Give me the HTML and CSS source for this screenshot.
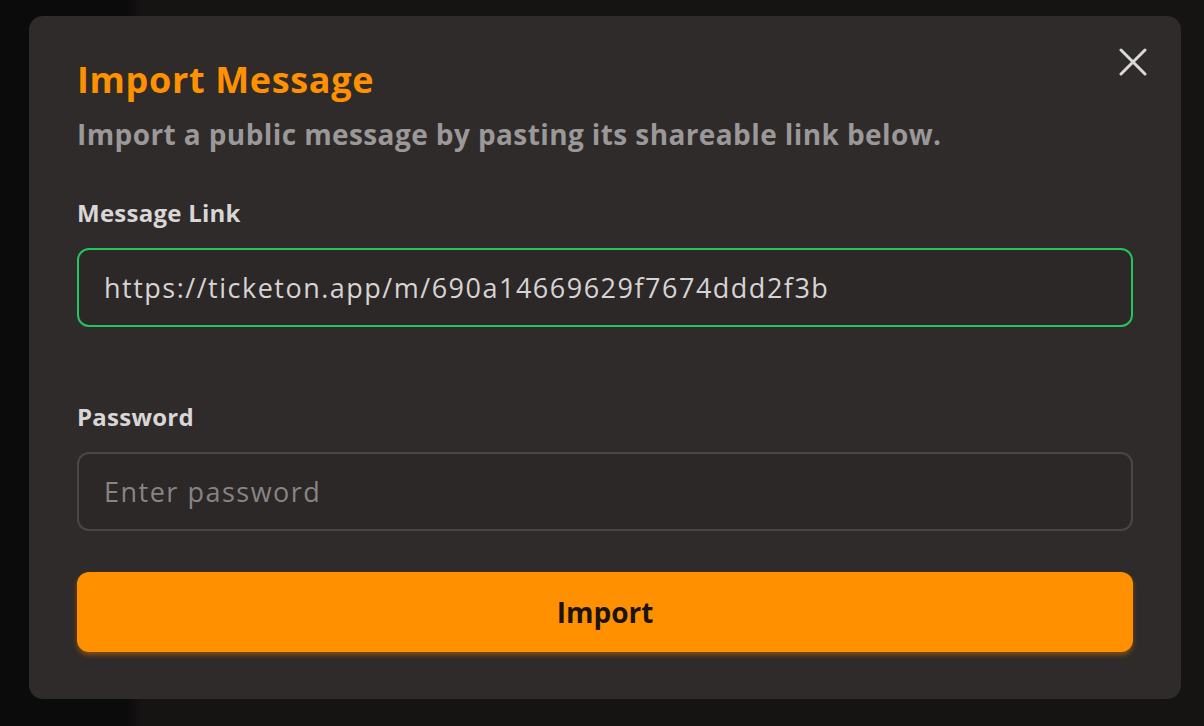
FILE: index.html
```html
<!DOCTYPE html>
<html lang="en">
<head>
  <meta charset="UTF-8">
  <meta name="viewport" content="width=device-width, initial-scale=1.0">
  <title>Import Message</title>
  <link rel="stylesheet" href="styles.css">
</head>
<body>
  <div class="backdrop">
    <div class="modal">
      <button class="close" type="button" aria-label="Close">
        <svg width="28" height="28" viewBox="0 0 28 28" fill="none" stroke="currentColor" stroke-width="3" stroke-linecap="round">
          <path d="M2 2L26 26M26 2L2 26"/>
        </svg>
      </button>
      <h2 class="title">Import Message</h2>
      <p class="desc">Import a public message by pasting its shareable link below.</p>
      <form>
        <label for="link">Message Link</label>
        <input type="text" id="link" class="field valid" value="https://ticketon.app/m/690a14669629f7674ddd2f3b">
        <label for="pw" class="pw-label">Password</label>
        <input type="password" id="pw" class="field" placeholder="Enter password">
        <button class="btn" type="submit">Import</button>
      </form>
    </div>
  </div><!--//backdrop-->
</body>
</html>
```

FILE: styles.css
```css
* {margin:0; padding:0; box-sizing:border-box;}
html, body {height:100%;}
body {background:linear-gradient(to right, #0b0b0b 0, #0b0b0b 128px, #161413 142px, #161413 100%); font-family:"Open Sans", "Noto Sans", sans-serif;}

.backdrop {padding:16px 23px 27px 29px;}
.modal {position:relative; height:683px; padding:42px 48px 47px 48px; background:#2f2b2a; border-radius:14px;}

.close {position:absolute; top:32px; right:34px; width:28px; height:28px; border:0 none; background:none; color:#d9d9d9; cursor:pointer;}
.close svg {display:block;}

.title {font-size:36px; line-height:44px; font-weight:700; color:#ff9100; letter-spacing:0.65px;}
.desc {margin-top:14px; font-size:28px; line-height:36px; font-weight:700; color:#9a9898; letter-spacing:0.4px;}

form {display:flex; flex-direction:column; margin-top:46px;}
form label {font-size:24px; line-height:30px; font-weight:700; color:#d8d6d6; letter-spacing:0.25px;}
form .pw-label {margin-top:75px;}

.field {height:79px; margin-top:20px; padding:0 25px; background:#2c2827; border:2px solid #4a4645; border-radius:12px; font-family:inherit; font-size:27px; letter-spacing:1.5px; color:#d6d4d4; outline:none;}
.field.valid {border-color:#22c55e;}
.field::placeholder {color:#878484;}

.btn {height:80px; margin-top:41px; background:#ff9100; border:0 none; border-radius:12px; box-shadow:0 3px 5px rgba(190, 100, 0, 0.6); font-family:inherit; font-size:28px; font-weight:700; color:#1a1410; cursor:pointer;}
```
